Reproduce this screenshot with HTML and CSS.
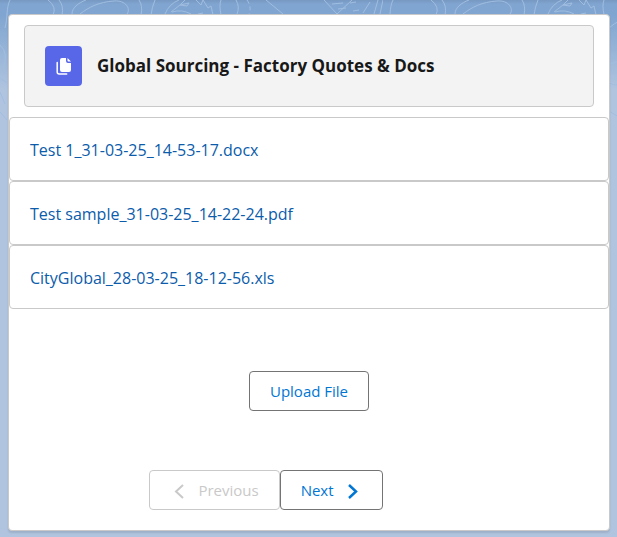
FILE: index.html
```html
<!DOCTYPE html>
<html lang="en">
<head>
<meta charset="UTF-8">
<meta name="viewport" content="width=device-width, initial-scale=1.0">
<title>Global Sourcing - Factory Quotes & Docs</title>
<link rel="stylesheet" href="styles.css">
</head>
<body>

<!-- Page backdrop -->
<svg class="backdrop" aria-hidden="true">
    <defs>
        <pattern id="contours" width="383" height="200" patternUnits="userSpaceOnUse">
            <g fill="none" stroke="#a0bde0" stroke-width="1">
                <path d="M10 0C6 8 8 17 5 28M48 0q9 7 5 15M59 0q5 6 3 15M80 14C89 7 99 2 114 1c12-1 17 8 13 13M72 14c0-6 6-11 14-14M139 0q4 6 2 15M155 0q-3 7-4 15M165 14q4-10 14-14M171 12l9-7 7 1 2-3-9 2 5-5M196 0l5 5 2-5 5 8 3-2 2 9M172 12q10-3 19 2M198 14l5-1M221 0q-2 5 0 15M236 0q4 7 1 14M266 0l17 14"/>
                <path d="M324 0l13 14 15-14M332 4l11-1M338 9l8-1M350 3l6-1M353 11l6-1M370 2l-7 11M378 0l-4 14M383 0l-3 14"/>
                <path stroke-dasharray="4 3" d="M247 0q5 7 2 14"/>
                <path d="M0 45q9 8 3 24M0 78l7 5M0 92l5 12M0 112l7 8M224 30q8-8 14-9M224 65q7-3 13-4M224 82q6 4 14 3M224 110l12 7"/>
            </g>
        </pattern>
    </defs>
    <rect width="100%" height="100%" fill="url(#contours)"/>
</svg>

<main class="card">
    <header class="card-header">
        <span class="header-icon">
            <svg width="15" height="17" viewBox="0 0 15 17" aria-hidden="true">
                <path fill="#fff" d="M6 0h4v3a2 2 0 0 0 2 2h3v7a2 2 0 0 1-2 2H6a2 2 0 0 1-2-2V2a2 2 0 0 1 2-2zM11.500 0L15 3.500h-2.500a1 1 0 0 1-1-1z"/>
                <path fill="none" stroke="#fff" stroke-width="1.500" stroke-linecap="round" d="M1.200 4.500v9.500a2 2 0 0 0 2 2h7.500"/>
            </svg>
        </span>
        <h1>Global Sourcing - Factory Quotes &amp; Docs</h1>
    </header>

    <!-- Files -->
    <ul class="file-list">
        <li><a href="#">Test 1_31-03-25_14-53-17.docx</a></li>
        <li><a href="#">Test sample_31-03-25_14-22-24.pdf</a></li>
        <li><a href="#">CityGlobal_28-03-25_18-12-56.xls</a></li>
    </ul>

    <div class="upload">
        <button type="button" class="btn">Upload File</button>
    </div>

    <!-- Paging -->
    <nav class="pager" aria-label="Pages">
        <button type="button" class="btn" disabled>
            <svg width="16" height="16" viewBox="0 0 16 16" aria-hidden="true"><path d="M13 3L6 9.500l7 6.500"/></svg>
            Previous
        </button>
        <button type="button" class="btn">
            Next
            <svg width="16" height="16" viewBox="0 0 16 16" aria-hidden="true"><path stroke-width="2.500" d="M3 3l7 6.500L3 16"/></svg>
        </button>
    </nav>
</main>

</body>
</html>
```

FILE: styles.css
```css
* { box-sizing: border-box; }
body {
    margin: 0;
    padding: 14px 7px 6px 8px;
    min-height: 100vh;
    font-family: "Segoe UI", "Open Sans", "Noto Sans", sans-serif;
    font-size: 16px;
    line-height: 24px;
    background: #b0c4df linear-gradient(#7698c1, #80a5d0 4px, #80a5d0 15px, #b0c4df 90px) no-repeat;
}
.backdrop {
    position: absolute;
    top: 0;
    left: 0;
    width: 100%;
    height: 130px;
    z-index: -1;
}
.card {
    background: #fff;
    border: 1px solid #c9c9c9;
    border-radius: 4px;
    box-shadow: 0 2px 2px rgba(0, 0, 0, 0.1);
    padding: 10px 0 20px;
}
.card-header {
    display: flex;
    align-items: center;
    gap: 15px;
    margin: 0 15px 10px;
    padding: 20px;
    background: #f3f3f3;
    border: 1px solid #c9c9c9;
    border-radius: 4px;
}
.header-icon {
    display: flex;
    align-items: center;
    justify-content: center;
    width: 37px;
    height: 40px;
    background: #5867e8;
    border-radius: 4px;
}
h1 {
    margin: 0;
    font-size: 17px;
    font-weight: 700;
    line-height: 24px;
    color: #181818;
}
.file-list {
    list-style: none;
    margin: 0;
    padding: 0;
}
.file-list li {
    padding: 20px 20px 18px;
    border: 1px solid #c9c9c9;
    border-radius: 4px;
}
.file-list a {
    color: #0b5cab;
    text-decoration: none;
}
.file-list a:hover { text-decoration: underline; }
.upload {
    display: flex;
    justify-content: center;
    padding: 62px 0 59px;
}
.btn {
    display: flex;
    align-items: center;
    gap: 12px;
    padding: 7px 20px;
    font: inherit;
    font-size: 15px;
    color: #0176d3;
    background: #fff;
    border: 1px solid #747474;
    border-radius: 4px;
    cursor: pointer;
}
.btn:hover { background: #f3f3f3; }
.btn:disabled {
    color: #c9c9c9;
    background: #fff;
    border-color: #c9c9c9;
    cursor: default;
}
.btn svg {
    fill: none;
    stroke: currentColor;
    stroke-width: 2;
    overflow: visible;
}
.pager {
    display: flex;
    justify-content: center;
    padding-right: 86px;
}
```
